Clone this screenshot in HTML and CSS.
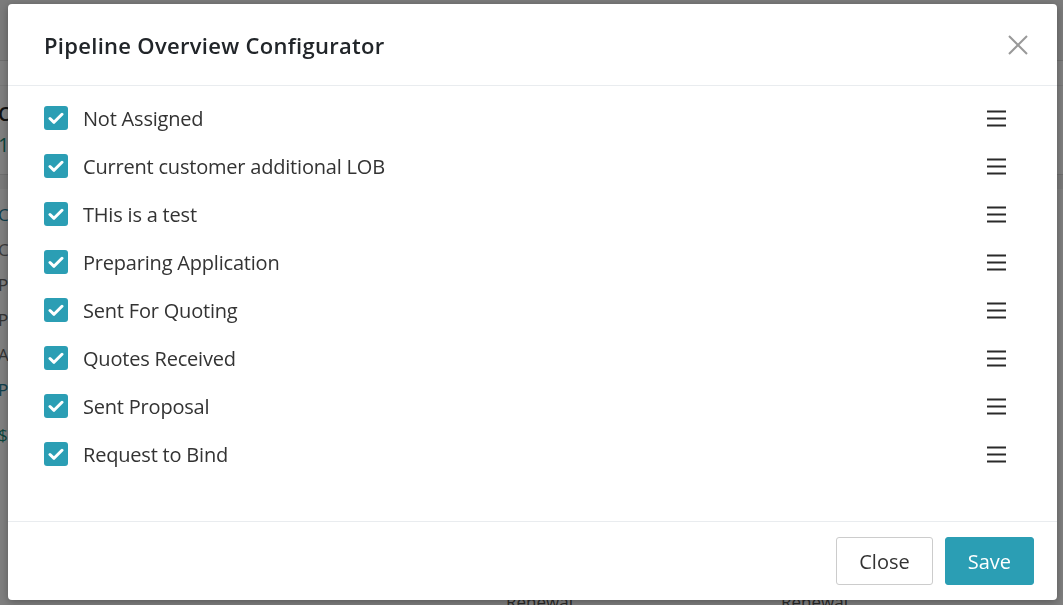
FILE: index.html
```html
<!DOCTYPE html>
<html lang="en">
<head>
    <meta charset="UTF-8">
    <meta name="viewport" content="width=device-width, initial-scale=1.0">
    <title>Pipeline Overview Configurator</title>
    <link rel="stylesheet" href="styles.css">
</head>
<body>
    <!-- page behind the dialog -->
    <div class="page">
        <div class="topbar"></div>
        <div class="tabs"></div>
        <div class="board">
            <div class="col">
                <div class="col-head">
                    <div class="col-title">Current</div>
                    <div class="col-total">16</div>
                </div>
                <div class="card">
                    <p class="teal">Client</p>
                    <p class="muted">Commercial</p>
                    <p class="gray">Policy</p>
                    <p class="gray">Premium</p>
                    <p class="gray">Agent</p>
                    <p class="teal">Policy</p>
                    <p class="green spaced">$</p>
                </div>
            </div>
            <div class="col"><div class="col-head"></div><div class="bottom-card"><span class="bar"></span>Renewal</div></div>
            <div class="col"><div class="col-head"></div><div class="bottom-card"><span class="bar"></span>Renewal</div></div>
            <div class="col right">
                <div class="col-head">
                    <div class="col-title">Renewal Upco</div>
                    <div class="col-total">$3</div>
                </div>
                <div class="card">
                    <p class="teal">Spotio</p>
                    <p class="gray">Carrier</p>
                    <p class="brown">Live Oli</p>
                    <p class="teal">$3</p>
                    <p class="gray">Carrier</p>
                    <p class="green spaced">$5</p>
                </div>
            </div>
        </div>
    </div>

    <div class="overlay">
        <div class="modal">
            <div class="modal-header">
                <h2>Pipeline Overview Configurator</h2>
                <button class="close-x" aria-label="Close">
                    <svg width="20" height="20" viewBox="0 0 20 20"><path d="M1 1L19 19M19 1L1 19" stroke="#999" stroke-width="2" fill="none"/></svg>
                </button>
            </div>
            <div class="modal-body" id="stages"></div>
            <div class="modal-footer">
                <button class="btn btn-light">Close</button>
                <button class="btn btn-primary">Save</button>
            </div>
        </div>
    </div>

    <script>
        let stages = ['Not Assigned', 'Current customer additional LOB', 'THis is a test', 'Preparing Application',
            'Sent For Quoting', 'Quotes Received', 'Sent Proposal', 'Request to Bind'];
        let list = document.getElementById('stages');
        stages.forEach(name => {
            let row = document.createElement('div');
            row.className = 'stage';
            row.innerHTML =
                '<label class="check"><span class="box"><svg width="16" height="13" viewBox="0 0 16 13"><path d="M2 6.5L6 10.3L14 2.3" stroke="#fff" stroke-width="3" fill="none" stroke-linecap="round" stroke-linejoin="round"/></svg></span>' +
                '<span class="name">' + name + '</span></label>' +
                '<span class="handle"><svg width="20" height="17" viewBox="0 0 20 17"><path d="M0 1.5H19M0 8.5H19M0 15.5H19" stroke="#2a2a2a" stroke-width="2"/></svg></span>';
            list.appendChild(row);
        });
    </script>
</body>
</html>
```
FILE: styles.css
```css
* { box-sizing: border-box; }
body { margin: 0; font-family: "Open Sans", "Noto Sans", sans-serif; color: #333; background: #fff; overflow: hidden; }
.page { height: 605px; }
.topbar { height: 61px; background: #f6f6f6; border-bottom: 1px solid #ddd; }
.tabs { height: 25px; border-bottom: 1px solid #eee; }
.board { display: grid; grid-template-columns: 262px 262px 262px 262px; gap: 10px; margin-left: -2px; }
.col-head { height: 89px; padding-top: 14px; border-bottom: 1px solid #ddd; background: #fff; }
.col-title { font-size: 20px; font-weight: 600; color: #222; }
.col-total { font-size: 20px; color: #178a78; margin-top: 4px; }
.card { padding: 14px 0; border-top: 14px solid #f3f3f3; }
.card p { margin: 0 0 12px; font-size: 17px; }
.card .spaced { margin-top: 22px; }
.teal { color: #1e7f99; }
.green { color: #178a78; }
.muted { color: #777; }
.gray { color: #666; }
.brown { color: #8a5a4a; }
.bottom-card { margin-top: 415px; display: flex; gap: 10px; font-size: 17px; color: #555; }
.bottom-card .bar { width: 4px; height: 20px; background: #1e7f99; }
.col:nth-child(2) .bottom-card { padding-left: 226px; }
.col:nth-child(3) .bottom-card { padding-left: 229px; }

.overlay { position: fixed; inset: 0; background: rgba(0, 0, 0, 0.5); padding: 4px 6px 5px 8px; }
.modal { background: #fff; border-radius: 4px; height: 596px; display: flex; flex-direction: column; box-shadow: 0 2px 8px rgba(0,0,0,0.3); }
.modal-header { height: 82px; display: flex; align-items: center; justify-content: space-between; padding: 0 29px 0 36px; border-bottom: 1px solid #e9ecef; }
.modal-header h2 { margin: 0; font-size: 22px; font-weight: 600; color: #212529; letter-spacing: 0.3px; }
.close-x { background: none; border: none; padding: 0; cursor: pointer; display: flex; }
.modal-body { flex: 1; padding: 8px 50px 0 36px; }
.stage { height: 48px; display: flex; align-items: center; justify-content: space-between; }
.check { display: flex; align-items: center; gap: 15px; cursor: pointer; }
.box { width: 24px; height: 24px; border-radius: 3px; background: #2b9eb4; display: flex; align-items: center; justify-content: center; }
.name { font-size: 20px; color: #333; letter-spacing: -0.2px; }
.handle { display: flex; cursor: grab; }
.modal-footer { height: 79px; border-top: 1px solid #e9ecef; display: flex; justify-content: flex-end; align-items: flex-start; gap: 12px; padding: 15px 23px 0 0; }
.btn { height: 48px; padding: 0 22px; font-family: inherit; font-size: 20px; border-radius: 3px; cursor: pointer; }
.btn-light { background: #fff; color: #333; border: 1px solid #ccc; }
.btn-primary { background: #2b9eb4; color: #fff; border: 1px solid #2b9eb4; }
```
